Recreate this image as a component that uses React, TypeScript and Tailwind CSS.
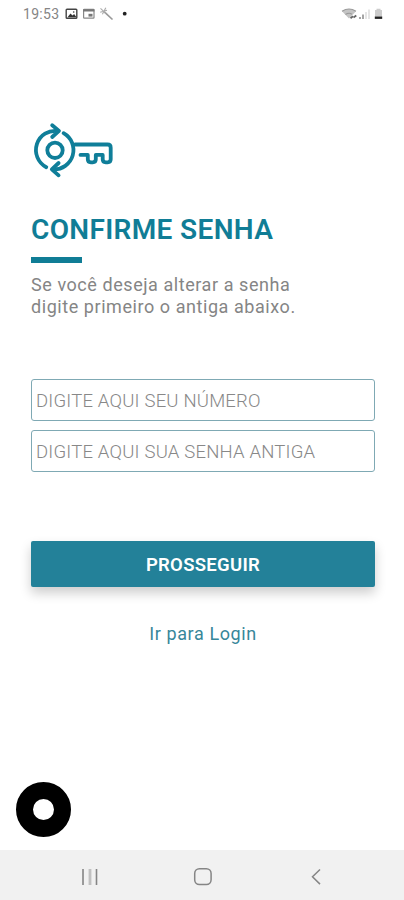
import { useState } from 'react';

function StatusBar() {
  return (
    <header className="flex h-[27px] items-center pl-[23px] pr-[20px] text-[#858585]">
      <span className="w-[42px] text-[14px] leading-none tracking-[0.3px]">19:53</span>
      <svg width="66" height="16" viewBox="0 0 66 16" fill="none">
        {/* gallery */}
        <rect x="1.2" y="3.2" width="10.6" height="9" rx="0.8" stroke="#444" strokeWidth="1.4" />
        <path d="M2.5 11.2l3-3.6 2 2 1.6-1.5 2.4 3.1z" fill="#333" />
        <circle cx="8.7" cy="6" r="0.8" fill="#333" />
        {/* calendar */}
        <rect x="18.6" y="3.4" width="10.4" height="8.8" rx="0.6" stroke="#888" strokeWidth="1.2" />
        <path d="M18.2 4.4h11.2" stroke="#777" strokeWidth="2.2" />
        <path d="M23.5 9.2h4" stroke="#777" strokeWidth="2.8" />
        {/* wand */}
        <path d="M39.3 5.8l8.2 7.7" stroke="#999" strokeWidth="1.7" />
        <path d="M35.5 2.4l5.6 5.2M40.8 1.8l-3.4 6.4M35.2 6.2l6.8-2" stroke="#aaa" strokeWidth="1.1" />
        <circle cx="59.7" cy="7.7" r="1.9" fill="#222" />
      </svg>
      <svg className="ml-auto" width="44" height="16" viewBox="0 0 44 16">
        <path d="M2 5.2Q9 .8 16 5.2L9 12.5z" fill="#c4c4c4" />
        <path d="M2 5.2Q9 .8 16 5.2M5.5 8.5Q9 6 12 8.3" fill="none" stroke="#999" strokeWidth="1.1" />
        <path d="M10.5 12.3l2.5-2M13.5 11.5l2.8-2" stroke="#666" strokeWidth="1.8" />
        <path d="M20 11v2M23 8.5v4.5" stroke="#888" strokeWidth="1.5" />
        <path d="M26 6v7M29 3.5v9.5" stroke="#ddd" strokeWidth="1.5" />
        <path d="M35 4h1.5V2.8h4V4H42v6.5h-7z" fill="#ccc" />
        <path d="M34.8 10.5h7.4v2.4h-7.4z" fill="#222" />
      </svg>
    </header>
  );
}

function KeyIcon() {
  return (
    <svg
      width="82"
      height="56"
      viewBox="32 122 82 56"
      fill="none"
      stroke="#0f7e99"
      strokeWidth="3.8"
      strokeLinecap="round"
      strokeLinejoin="round"
    >
      <path d="M46.3 167.2A19.3 19.3 0 0 1 58 131" />
      <path d="M52.2 125.2l6.8 5.7-6.8 6.1" />
      <path d="M63.6 133.2A19.3 19.3 0 0 1 53 169.3" />
      <path d="M58.6 163l-6.8 6.3 6.8 6" />
      <circle cx="55" cy="150.3" r="7.7" />
      <path d="M75 144.5h32.5q3.2 0 3.2 3.2v11.6q0 3-3 3h-2q-3 0-3-3v-4.4h-6.9v4.4q0 3-3 3h-2q-3 0-3-3v-4.4H80.5" />
    </svg>
  );
}

interface CampoProps {
  placeholder: string;
  type: 'tel' | 'password';
  value: string;
  onChange: (value: string) => void;
}

function Campo({ placeholder, type, value, onChange }: CampoProps) {
  return (
    <input
      type={type}
      aria-label={placeholder}
      placeholder={placeholder}
      value={value}
      onChange={(e) => onChange(e.target.value)}
      className="h-[42px] w-full rounded-[3px] border-[1.5px] border-[#7fa9b4] px-1 pt-[2px] text-[18.5px] font-light tracking-[0.2px] text-[#555] placeholder:text-[#888]"
    />
  );
}

function NavBar() {
  return (
    <nav className="flex h-[50px] items-center bg-[#f1f1f1] pl-[81px] pr-[79px] pt-[3px]">
      <svg className="w-full" height="20" viewBox="0 0 244 20" fill="none">
        <path d="M2 2v16M15.5 2v16" stroke="#858585" strokeWidth="1.6" />
        <path d="M9 2v16" stroke="#c0c0c0" strokeWidth="2.8" />
        <rect x="113.7" y="1.7" width="16.4" height="15.8" rx="4.7" stroke="#858585" strokeWidth="1.5" />
        <path d="M239 2.5l-7.5 7.3 7.5 7.3" stroke="#858585" strokeWidth="1.5" />
      </svg>
    </nav>
  );
}

export default function App() {
  const [numero, setNumero] = useState('');
  const [senha, setSenha] = useState('');

  return (
    <div className="flex h-[900px] w-[404px] flex-col bg-white font-[Roboto,sans-serif]">
      <StatusBar />
      <main className="flex flex-1 flex-col pl-[31px] pr-[29px] pt-[95px]">
        <div className="pl-px">
          <KeyIcon />
        </div>
        <h1 className="mt-[35px] text-[28px] font-semibold leading-[34px] tracking-[0.35px] text-[#107d96]">
          CONFIRME SENHA
        </h1>
        <div className="mt-[10px] h-[6px] w-[51px] bg-[#107d96]" />
        <p className="mt-[11px] whitespace-nowrap text-[18px] leading-[22px] tracking-[0.56px] text-[#858585]">
          Se você deseja alterar a senha
          <br />
          digite primeiro o antiga abaixo.
        </p>
        <div className="mt-[61px] flex flex-col gap-[9px]">
          <Campo placeholder="DIGITE AQUI SEU NÚMERO" type="tel" value={numero} onChange={setNumero} />
          <Campo placeholder="DIGITE AQUI SUA SENHA ANTIGA" type="password" value={senha} onChange={setSenha} />
        </div>
        <button className="mt-[69px] h-[46px] rounded-[2px] bg-[#238199] pt-[3px] text-[18.5px] font-semibold tracking-[0.3px] text-white shadow-[0_6px_12px_rgba(0,0,0,0.2)]">
          PROSSEGUIR
        </button>
        <a href="#login" className="mt-[35px] self-center text-[18px] leading-[24px] tracking-[0.6px] text-[#37879a]">
          Ir para Login
        </a>
        <div className="-ml-[15px] mb-[13px] mt-auto size-[55px] rounded-full border-[17px] border-black bg-white" />
      </main>
      <NavBar />
    </div>
  );
}
